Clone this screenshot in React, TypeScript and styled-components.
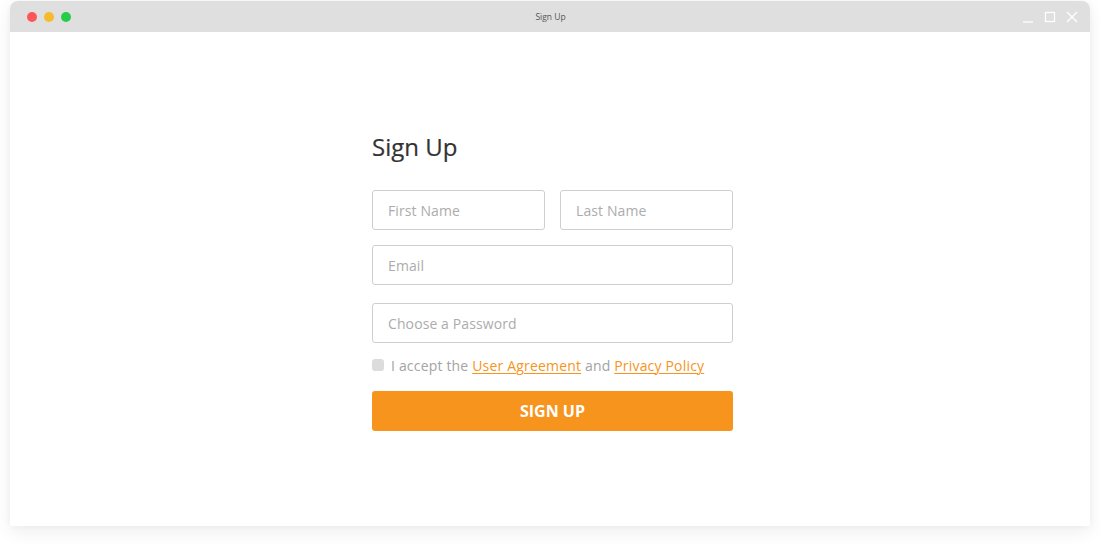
import React from "react";
import styled, { createGlobalStyle } from "styled-components";

const Global = createGlobalStyle`
  html, body { margin: 0; padding: 0; background: #ffffff; }
  body { font-family: "Open Sans", "Liberation Sans", sans-serif; }
  * { box-sizing: border-box; }
`;

const Page = styled.div`
  width: 1100px;
  height: 545px;
  padding: 1px 10px 0 10px;
`;

const Window = styled.div`
  width: 1080px;
  height: 525px;
  background: #fff;
  border-radius: 8px 8px 0 0;
  box-shadow: 0 6px 18px rgba(0, 0, 0, 0.07), 0 0 6px rgba(0, 0, 0, 0.04);
  display: flex;
  flex-direction: column;
`;

const TitleBar = styled.div`
  height: 31px;
  background: #dfdfdf;
  border-radius: 8px 8px 0 0;
  display: grid;
  grid-template-columns: 1fr auto 1fr;
  align-items: center;
  padding: 0 12px 0 17px;
`;

const Lights = styled.div`
  display: flex;
  gap: 7px;
`;

const Light = styled.span<{ $c: string }>`
  width: 10px;
  height: 10px;
  border-radius: 50%;
  background: ${(p) => p.$c};
`;

const WinTitle = styled.div`
  font-size: 8.5px;
  color: #555;
  margin-right: 4px;
  margin-top: -1px;
`;

const Controls = styled.div`
  display: flex;
  justify-content: flex-end;
  align-items: center;
  gap: 10px;
`;

const Content = styled.div`
  flex: 1;
  display: flex;
  justify-content: center;
  padding: 99px 0 0 5px;
`;

const Form = styled.form`
  width: 361px;
  display: flex;
  flex-direction: column;
`;

const Heading = styled.h1`
  margin: 0 0 27px 0;
  font-size: 24px;
  line-height: 32px;
  font-weight: 400;
  color: #333;
  -webkit-text-stroke: 0.2px #333;
`;

const Row = styled.div`
  display: flex;
  gap: 15px;
`;

const Input = styled.input<{ $mb?: number; $grow?: boolean }>`
  flex: ${(p) => (p.$grow ? "1 1 0" : "none")};
  min-width: 0;
  width: 100%;
  height: 40px;
  border: 1px solid #cfcfcf;
  border-radius: 3px;
  padding: 0 15px;
  font-family: "Open Sans", sans-serif;
  font-size: 14px;
  font-weight: 400;
  letter-spacing: 0.1px;
  color: #333;
  margin-bottom: ${(p) => p.$mb ?? 0}px;
  outline: none;
  &::placeholder {
    color: #acacac;
  }
`;

const CheckRow = styled.label`
  display: flex;
  align-items: center;
  gap: 7px;
  height: 20px;
  margin: 12px 0 16px 0;
  font-size: 14px;
  font-weight: 400;
  letter-spacing: 0.18px;
  color: #a3a3a3;
`;

const Box = styled.span`
  width: 12px;
  height: 12px;
  border-radius: 3px;
  background: #dcdcdc;
`;

const Link = styled.a`
  color: #f7941d;
  text-decoration: underline;
  text-underline-offset: 2px;
  text-decoration-thickness: 1px;
`;

const Button = styled.button`
  height: 40px;
  border: none;
  border-radius: 3px;
  background: #f7941d;
  color: #fff;
  font-family: "Open Sans", sans-serif;
  font-weight: 700;
  font-size: 16px;
`;

export default function App() {
  return (
    <>
      <Global />
      <Page>
        <Window>
          <TitleBar>
            <Lights>
              <Light $c="#fe5557" />
              <Light $c="#f6bb2a" />
              <Light $c="#25cd4b" />
            </Lights>
            <WinTitle>Sign Up</WinTitle>
            <Controls>
              <svg width="12" height="12" viewBox="0 0 12 12">
                <line x1="1" y1="11" x2="11" y2="11" stroke="#fff" strokeWidth="1.3" />
              </svg>
              <svg width="12" height="12" viewBox="0 0 12 12">
                <rect x="1.5" y="1.5" width="9" height="9" fill="none" stroke="#fff" strokeWidth="1.3" />
              </svg>
              <svg width="12" height="12" viewBox="0 0 12 12">
                <path d="M1 1 L11 11 M11 1 L1 11" stroke="#fff" strokeWidth="1.3" />
              </svg>
            </Controls>
          </TitleBar>
          <Content>
            <Form onSubmit={(e) => e.preventDefault()}>
              <Heading>Sign Up</Heading>
              <Row>
                <Input placeholder="First Name" $mb={15} $grow />
                <Input placeholder="Last Name" $mb={15} $grow />
              </Row>
              <Input placeholder="Email" $mb={18} />
              <Input placeholder="Choose a Password" type="password" />
              <CheckRow>
                <Box />
                <span>
                  I accept the <Link>User Agreement</Link> and <Link>Privacy Policy</Link>
                </span>
              </CheckRow>
              <Button type="submit">SIGN UP</Button>
            </Form>
          </Content>
        </Window>
      </Page>
    </>
  );
}
